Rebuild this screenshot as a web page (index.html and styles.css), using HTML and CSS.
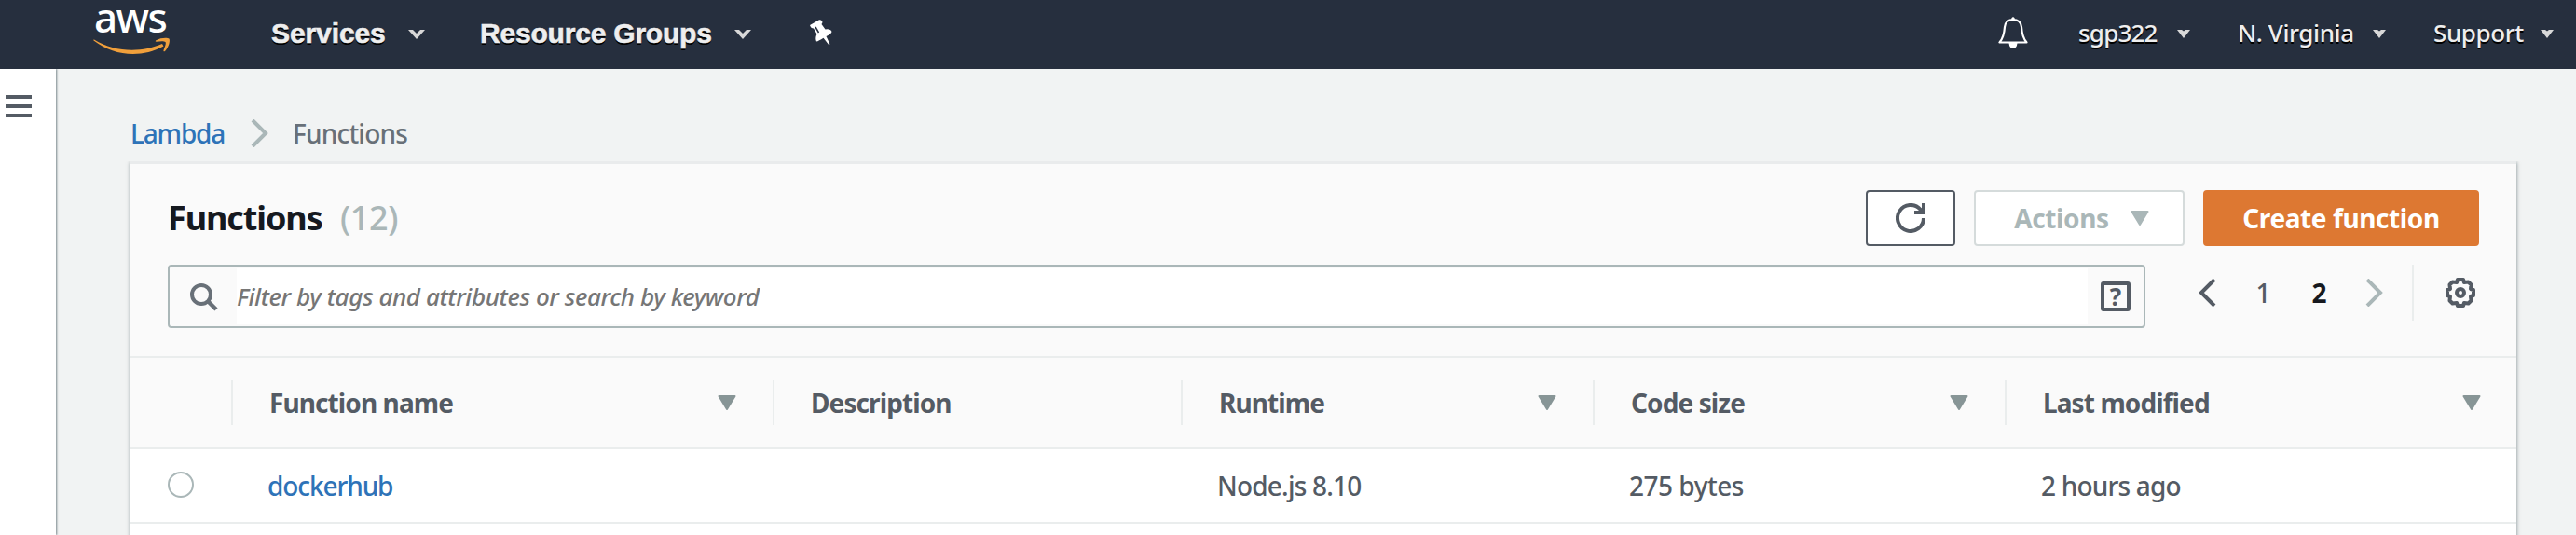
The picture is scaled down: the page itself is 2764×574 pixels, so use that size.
FILE: index.html
```html
<!DOCTYPE html>
<html lang="en">
<head>
<meta charset="utf-8">
<title>Functions - Lambda</title>
<link rel="stylesheet" href="styles.css">
</head>
<body>
<header class="topbar">
  <a class="logo">
    <span class="logo-word">aws</span>
    <svg class="logo-smile" width="84" height="20" viewBox="0 0 84 20"><path d="M1 2.500C24 16.500 52 16.500 74 7L75.500 9.500C51 23 22 20 .5 3.500Q0 2 1 2.500Z"/><path d="M67 3.500C73 0 80 .4 81.500 1.500C83 4.500 80.500 11 77 15Q75 16 75.500 14C77 10 78.500 6.500 77.500 5C76 4 72 4.200 68 4.800Q66 4.800 67 3.500Z"/></svg>
  </a>
  <nav class="nav-main">
    <a class="nav-item nav-services"><span>Services</span><svg class="chev" width="18" height="10" viewBox="0 0 18 10"><path d="M0 0H5L9 4L13 0H18L9 10Z"/></svg></a>
    <a class="nav-item nav-groups"><span>Resource Groups</span><svg class="chev" width="18" height="10" viewBox="0 0 18 10"><path d="M0 0H5L9 4L13 0H18L9 10Z"/></svg></a>
    <svg class="pin" width="24" height="27" viewBox="0 0 24 27"><path fill="#fff" d="M0 6L10 .3Q13 0 13.500 3L12.500 5L16.500 10.500Q22 9.500 23.500 13Q23 15.500 17.500 18L21.500 26.500L20 26.800L14.500 19.700Q9.500 23 7 23.500Q5.500 20 7.500 15.500L4 9.500Q1 9.500 0 6Z"/><path d="M6 8L9.500 14" stroke="#262f3e" stroke-width="1.500"/></svg>
  </nav>
  <nav class="nav-user">
    <svg class="bell" width="32" height="34" viewBox="0 0 32 34"><path fill="none" stroke="#fff" stroke-width="2.200" stroke-linejoin="round" d="M16 3C10.500 3 7.500 6.500 7 11C6.500 18 5.500 23 1.500 27.500H30.500C26.500 23 25.500 18 25 11C24.500 6.500 21.500 3 16 3Z"/><path fill="#fff" d="M14.300 3V1.500Q16-.8 17.700 1.500V3ZM11.500 28H20.500Q20 34 16 34T11.500 28Z"/></svg>
    <a class="user-item user-name"><span>sgp322</span><svg class="caret" width="14" height="9" viewBox="0 0 14 9"><path d="M0 0H5L7 1.500L9 0H14L7 9Z"/></svg></a>
    <a class="user-item user-region"><span>N. Virginia</span><svg class="caret" width="14" height="9" viewBox="0 0 14 9"><path d="M0 0H5L7 1.500L9 0H14L7 9Z"/></svg></a>
    <a class="user-item user-support"><span>Support</span><svg class="caret" width="14" height="9" viewBox="0 0 14 9"><path d="M0 0H5L7 1.500L9 0H14L7 9Z"/></svg></a>
  </nav>
</header>
<div class="shell">
  <aside class="rail"><i></i><i></i><i></i></aside>
  <main class="content">
    <nav class="crumbs">
      <a class="crumb-link">Lambda</a>
      <svg width="20" height="30" viewBox="0 0 20 30"><path d="M2 1L16 15L2 29" fill="none" stroke="#aab7b8" stroke-width="4"/></svg>
      <span class="crumb-here">Functions</span>
    </nav>
    <section class="card">
      <div class="card-head">
        <h1>Functions</h1><span class="count">(12)</span>
        <div class="actions">
          <button class="btn btn-refresh"><svg width="32" height="32" viewBox="0 0 32 32"><path d="M30 16A14 14 0 1 1 26.500 6.700L30 10" fill="none" stroke="#545b64" stroke-width="4"/><path d="M30 0V10H20" fill="none" stroke="#545b64" stroke-width="4"/></svg></button>
          <button class="btn btn-actions"><span>Actions</span><svg width="20" height="16" viewBox="0 0 20 16"><path d="M1.500 1H18.500L10 15Z" fill="#aab7b8" stroke="#aab7b8" stroke-width="2" stroke-linejoin="round"/></svg></button>
          <button class="btn btn-create">Create function</button>
        </div>
      </div>
      <div class="filter-row">
        <div class="search">
          <span class="search-icon"><svg width="30" height="30" viewBox="0 0 30 30"><circle cx="12" cy="12" r="10" fill="none" stroke="#687078" stroke-width="4"/><path d="M19 19L28 28" stroke="#687078" stroke-width="4.500"/></svg></span>
          <span class="search-input">Filter by tags and attributes or search by keyword</span>
          <span class="search-help"><span>?</span></span>
        </div>
        <div class="pager">
          <svg width="20" height="30" viewBox="0 0 20 30"><path d="M18 1L4 15L18 29" fill="none" stroke="#545b64" stroke-width="4"/></svg>
          <span class="page">1</span>
          <span class="page page-current">2</span>
          <svg width="20" height="30" viewBox="0 0 20 30"><path d="M2 1L16 15L2 29" fill="none" stroke="#aab7b8" stroke-width="4"/></svg>
        </div>
        <div class="settings">
          <svg width="32" height="32" viewBox="0 0 32 32" fill="none" stroke="#545b64" stroke-width="4" stroke-linejoin="round"><path d="M13 2H19L20 5L24.500 4.500L27.500 7.500L27 12L30 13V19L27 20L27.500 24.500L24.500 27.500L20 27L19 30H13L12 27L7.500 27.500L4.500 24.500L5 20L2 19V13L5 12L4.500 7.500L7.500 4.500L12 5Z"/><circle cx="16" cy="16" r="4"/></svg>
        </div>
      </div>
      <div class="table">
        <div class="row head">
          <div class="cell pick"></div>
          <div class="cell"><span>Function name</span><svg class="sort" width="20" height="16" viewBox="0 0 20 16"><path d="M1.500 1H18.500L10 15Z"/></svg></div>
          <div class="cell"><span>Description</span></div>
          <div class="cell"><span>Runtime</span><svg class="sort" width="20" height="16" viewBox="0 0 20 16"><path d="M1.500 1H18.500L10 15Z"/></svg></div>
          <div class="cell"><span>Code size</span><svg class="sort" width="20" height="16" viewBox="0 0 20 16"><path d="M1.500 1H18.500L10 15Z"/></svg></div>
          <div class="cell"><span>Last modified</span><svg class="sort" width="20" height="16" viewBox="0 0 20 16"><path d="M1.500 1H18.500L10 15Z"/></svg></div>
        </div>
        <div class="row body">
          <div class="cell pick"><span class="radio"></span></div>
          <div class="cell"><a class="fn-link">dockerhub</a></div>
          <div class="cell"></div>
          <div class="cell">Node.js 8.10</div>
          <div class="cell size">275 bytes</div>
          <div class="cell">2 hours ago</div>
        </div>
      </div>
    </section>
  </main>
</div>
</body>
</html>
```
FILE: styles.css
```css
* { box-sizing: border-box; }
html, body { margin: 0; height: 574px; overflow: hidden; }
body {
  background: #f1f3f3;
  color: #545b64;
  font: 500 28px/40px "Noto Sans", "Open Sans", sans-serif;
  letter-spacing: -0.8px;
  white-space: nowrap;
}
svg { display: block; flex: none; }

.topbar { display: flex; height: 74px; background: #262f3e; color: #eee; }
.logo { width: 291px; padding: 0 0 0 100px; }
.logo-word { display: block; height: 40px; padding-left: 1px; font-size: 44px; line-height: 37px; letter-spacing: -1.6px; color: #fff; }
.logo-smile { fill: #f09f3b; }
.nav-main, .nav-user { display: flex; align-items: center; height: 71px; text-shadow: 0 2px 0 #000; }
.nav-item { display: flex; align-items: center; font: bold 30px/40px "Liberation Sans", Arial, sans-serif; letter-spacing: -0.1px; -webkit-text-stroke: .6px #eee; }
.nav-services { width: 224px; }
.nav-services span { width: 147px; }
.nav-groups { width: 354px; }
.nav-groups span { width: 273px; letter-spacing: -0.2px; }
.chev { margin-top: 3px; fill: #d8d8d8; }
.pin { margin-top: -3px; }
.nav-user { margin-left: auto; height: 69px; font-size: 26px; letter-spacing: -0.4px; }
.bell { margin-right: 54px; }
.user-item { display: flex; align-items: center; justify-content: space-between; }
.user-name { width: 120px; margin-right: 51px; letter-spacing: -0.8px; }
.user-region { width: 159px; margin-right: 51px; }
.user-support { width: 129px; margin-right: 24px; }
.caret { margin-top: 3px; fill: #d8d8d8; }

.shell { display: flex; height: 500px; }
.rail { width: 60px; flex: none; padding: 28px 0 0 6px; background: #fff; box-shadow: 1px 0 2px rgba(0, 28, 36, .5); clip-path: inset(0 -6px 0 0); }
.rail i { display: block; width: 28px; height: 4px; margin-bottom: 6px; background: #545b64; }
.content { width: 2640px; padding: 49px 0 0 80px; }
.crumbs { display: flex; align-items: center; height: 40px; margin-bottom: 10px; }
.crumb-link { width: 129px; color: #2e73b8; letter-spacing: -1.2px; }
.crumbs svg { margin-right: 25px; }
.crumb-here { color: #687078; }

.card { width: 2560px; height: 410px; border-top: 3px solid #e9ebec; background: #fafafa; box-shadow: 0 1px 4px rgba(0, 28, 36, .5); clip-path: inset(0 -8px 0 -8px); }
.card-head { display: flex; height: 108px; padding: 28px 40px 0; }
h1 { width: 185px; margin: 0; color: #16191f; font-size: 36px; font-weight: 700; line-height: 60px; letter-spacing: -1.1px; }
.count { font-size: 36px; line-height: 60px; letter-spacing: -0.4px; color: #aab7b8; }
.actions { display: flex; gap: 20px; margin-left: auto; }
.btn { display: flex; align-items: center; justify-content: center; height: 60px; padding: 0; border: 2px solid #545b64; border-radius: 4px; background: #fff; font: bold 28px/56px "Noto Sans", "Open Sans", sans-serif; letter-spacing: -0.4px; }
.btn-refresh { width: 96px; }
.btn-actions { width: 226px; gap: 23px; padding-left: 5px; border-color: #d5dbdb; color: #aab7b8; }
.btn-create { width: 296px; border-color: #dd7832; background: #dd7832; color: #fff; }
.filter-row { display: flex; height: 98px; padding-left: 40px; }
.search { display: flex; width: 2122px; height: 68px; padding: 2px; border: 2px solid #aab7b8; border-radius: 4px; }
.search-icon { width: 70px; padding: 16px 0 0 20px; }
.search-input { flex: 1; background: #fff; color: #767676; font-size: 26px; font-style: italic; line-height: 61px; letter-spacing: -0.4px; }
.search-help { width: 58px; padding: 14px 0 0 14px; }
.search-help span { display: block; width: 32px; height: 32px; border: 4px solid #545b64; border-radius: 3px; font-size: 26px; font-weight: 700; line-height: 24px; text-align: center; letter-spacing: 0; }
.pager { display: flex; align-items: center; width: 286px; height: 60px; padding-left: 56px; }
.page { width: 60px; text-align: center; padding-left: 2px; }
.pager svg + .page { margin-left: 19px; }
.page-current { width: 60px; color: #16191f; font-weight: 700; }
.pager .page-current + svg { margin-left: 21px; }
.settings { height: 60px; padding: 14px 0 0 34px; border-left: 2px solid #eaeded; }

.row { display: grid; grid-template-columns: 108px 581px 438px 442px 442px 549px; }
.cell { display: flex; align-items: center; }
.head { height: 100px; padding: 24px 0; border: solid #eaeded; border-width: 2px 0; color: #545b64; font-weight: 700; letter-spacing: -0.9px; }
.head .cell { justify-content: space-between; padding: 0 39px 0 39px; border-left: 2px solid #eaeded; }
.head .cell:last-child { padding-right: 38px; }
.head .pick { border: 0; }
.sort { fill: #879596; stroke: #879596; stroke-width: 2; stroke-linejoin: round; }
.body { height: 80px; border-bottom: 2px solid #eaeded; background: #fff; box-shadow: 0 20px 0 #fff; }
.body .cell { padding-left: 39px; }
.body .pick { padding: 0 0 2px 40px; }
.body .size { letter-spacing: -0.5px; }
.fn-link { color: #2e73b8; letter-spacing: -1.1px; }
.radio { width: 28px; height: 28px; border: 2px solid #aab7b8; border-radius: 50%; }
```
